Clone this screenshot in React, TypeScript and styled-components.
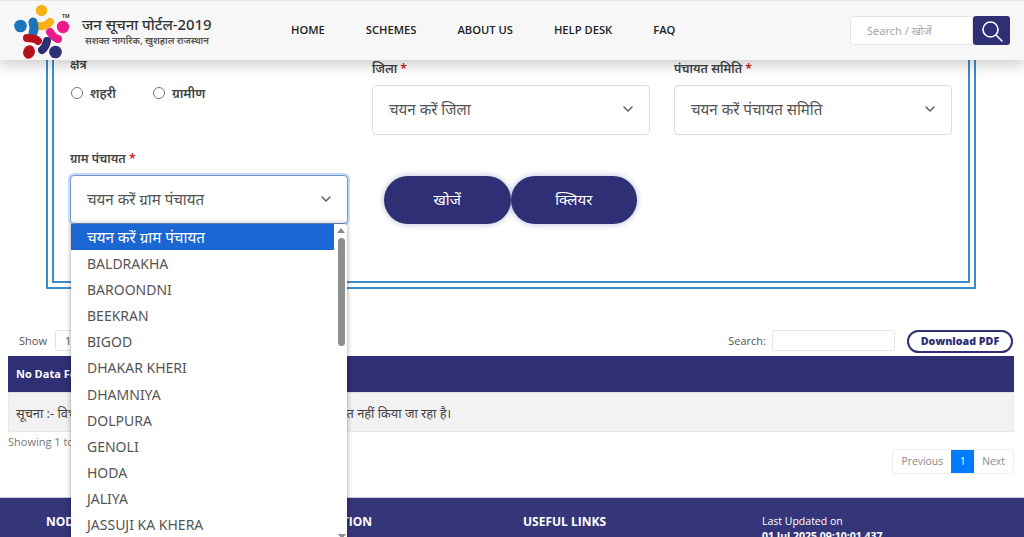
import React from 'react';
import styled, { createGlobalStyle } from 'styled-components';
import { ChevronDown } from 'lucide-react';

const NAVY = '#2e2f75';
const HINDI = `"Noto Sans", "Noto Sans Devanagari", "Open Sans", sans-serif`;

const GlobalStyle = createGlobalStyle`
  html, body { margin: 0; padding: 0; background: #fff; }
  body { font-family: "Open Sans", "Noto Sans", sans-serif; color: #555; }
  * { box-sizing: border-box; }
`;

const Page = styled.div`
  position: relative;
  height: 537px;
  overflow: hidden;
  background: #fff;
`;

const Header = styled.header`
  position: relative;
  z-index: 5;
  height: 60px;
  display: flex;
  align-items: center;
  background: #f7f7f7;
  border-top: 1px solid #e6e6e6;
  box-shadow: 0 4px 14px rgba(0, 0, 0, 0.22);
`;

const Brand = styled.div`
  width: 291px;
  display: flex;
  align-items: center;
  flex: none;
  padding-left: 12px;
`;

const BrandText = styled.div`
  font-family: ${HINDI};
  color: #333;
`;

const BrandTitle = styled.div`
  font-size: 14.9px;
  line-height: 20px;
  font-weight: 500;
  white-space: nowrap;
`;

const BrandSub = styled.div`
  font-size: 9.4px;
  line-height: 12px;
  margin: 1px 0 0 3px;
  font-weight: 600;
  color: #555;
  white-space: nowrap;
`;

const Nav = styled.nav`
  display: flex;
  flex: 1;
  gap: 41px;
  padding-bottom: 2px;
`;

const NavLink = styled.a`
  font-size: 11.2px;
  font-weight: 600;
  color: #222;
`;

const SearchBox = styled.div`
  display: flex;
  margin-right: 14px;
  width: 160px;
  height: 29px;
`;

const SearchInput = styled.div`
  flex: 1;
  background: #fff;
  border: 1px solid #e4e4e4;
  border-radius: 4px 0 0 4px;
  padding-left: 16px;
  font: 11px/27px ${HINDI};
  color: #a5a5a5;
`;

const SearchButton = styled.div`
  width: 37px;
  background: ${NAVY};
  border-radius: 3px;
  display: flex;
  align-items: center;
  justify-content: center;
`;

const FormFrame = styled.section`
  margin: -12px 48px 0 46px;
  height: 241px;
  border: 2px solid #3c8ccb;
  border-top: 0;
  padding: 0 4px 4px;
`;

const FormInner = styled.div`
  height: 100%;
  border: 2px solid #3c8ccb;
  border-top: 0;
  padding: 9px 16px 0;
  display: grid;
  grid-template-columns: repeat(3, 278px);
  column-gap: 24px;
  grid-template-rows: 89px 1fr;
`;

const Field = styled.div`
  padding-top: ${p => p.$top || 0}px;
`;

const Label = styled.div`
  font: 600 12.3px/16px ${HINDI};
  color: #444;
  margin-bottom: 8px;
`;

const Required = styled.span`
  color: #d01818;
`;

const RadioRow = styled.div`
  display: flex;
  gap: 37px;
  padding: 4px 0 0 1px;
`;

const RadioItem = styled.div`
  display: flex;
  align-items: center;
  gap: 7px;
  font: 600 13px/16px ${HINDI};
  color: #444;
`;

const RadioDot = styled.span`
  width: 12px;
  height: 12px;
  border: 1px solid #777;
  border-radius: 50%;
  background: #fff;
`;

const SelectBox = styled.div`
  height: ${p => (p.$open ? 49 : 50)}px;
  display: flex;
  align-items: center;
  justify-content: space-between;
  padding: 0 13px 2px 16px;
  background: #fff;
  border: 1px solid ${p => (p.$open ? '#6f95c9' : '#ddd')};
  border-radius: 4px;
  box-shadow: ${p => (p.$open ? '0 0 0 2px rgba(128, 176, 240, 0.45)' : 'none')};
  font: 400 15.1px/20px ${HINDI};
  color: #555;
`;

const ButtonRow = styled.div`
  display: flex;
  padding: 30px 0 0 12px;
`;

const PillButton = styled.div`
  width: 126.5px;
  height: 48px;
  background: ${NAVY};
  border-radius: 24px;
  box-shadow: 0 0 6px rgba(46, 47, 117, 0.35);
  color: #fff;
  font: 400 15px/46px ${HINDI};
  text-align: center;
`;

const TableSection = styled.section`
  padding: 40px 10px 0 8px;
`;

const Toolbar = styled.div`
  display: flex;
  align-items: center;
  height: 23px;
  margin-bottom: 4px;
  font-size: 11px;
  color: #555;
`;

const ShowLabel = styled.span`
  margin-left: 11px;
`;

const LengthBox = styled.div`
  margin-left: 8px;
  width: 60px;
  height: 21px;
  border: 1px solid #e3e3e3;
  border-radius: 3px;
  padding-left: 9px;
  line-height: 19px;
`;

const SearchLabel = styled.span`
  margin-left: auto;
`;

const FilterInput = styled.div`
  margin-left: 6px;
  width: 123px;
  height: 21px;
  border: 1px solid #e6e6e6;
  border-radius: 2px;
`;

const PdfButton = styled.div`
  margin: 2px 1px 0 12px;
  width: 106px;
  height: 23px;
  border: 2px solid ${NAVY};
  border-radius: 12px;
  color: ${NAVY};
  font-size: 10.7px;
  font-weight: 800;
  line-height: 19px;
  text-align: center;
`;

const TableHead = styled.div`
  height: 36px;
  background: ${NAVY};
  color: #fff;
  font-size: 11px;
  font-weight: 700;
  line-height: 36px;
  padding-left: 8px;
`;

const TableRow = styled.div`
  height: 40px;
  background: #f2f2f2;
  border: 1px solid #e8e8e8;
  border-top: 1px solid #ddd;
  padding-left: 7px;
  font: 400 12.8px/40px ${HINDI};
  color: #444;
  white-space: nowrap;
`;

const TableFoot = styled.div`
  display: flex;
  justify-content: space-between;
`;

const ShowingText = styled.div`
  font-size: 11px;
  line-height: 20px;
  color: #777;
`;

const Pager = styled.div`
  margin-top: 17px;
  display: flex;
  height: 25px;
  border: 1px solid #eee;
  border-radius: 3px;
  font-size: 10.4px;
  line-height: 23px;
  color: #888;
`;

const PagerItem = styled.span`
  padding: 0 8px;
  min-width: ${p => (p.$active ? 23 : 0)}px;
  text-align: center;
  background: ${p => (p.$active ? '#007bff' : 'transparent')};
  color: ${p => (p.$active ? '#fff' : '#888')};
`;

const Footer = styled.footer`
  margin-top: 23px;
  height: 60px;
  background: #35357a;
  border-top: 1px solid #c9c9de;
  display: grid;
  grid-template-columns: 477px 239px 1fr;
  padding: 16px 0 0 46px;
  color: #fff;
`;

const FooterTitle = styled.div`
  font-size: 12px;
  font-weight: 700;
  line-height: 16px;
`;

const FooterSplit = styled.div`
  display: flex;
  width: 326px;
  justify-content: space-between;
`;

const FooterNote = styled.div`
  font-size: 10.5px;
  line-height: 15px;
`;

const FooterDate = styled.div`
  font-size: 10.5px;
  font-weight: 700;
  line-height: 15px;
`;

const Dropdown = styled.div`
  position: absolute;
  z-index: 3;
  left: 71px;
  top: 224px;
  width: 276px;
  height: 320px;
  background: #fff;
  border-radius: 3px 3px 0 0;
  box-shadow: 0 0 5px rgba(0, 0, 0, 0.4);
  padding-right: 13px;
`;

const Option = styled.div`
  height: 26.1px;
  margin-bottom: ${p => (p.$selected ? 1 : 0)}px;
  padding-left: 16px;
  font: 400 ${p => (p.$selected ? 15.2 : 14)}px/26px ${HINDI};
  color: ${p => (p.$selected ? '#fff' : '#555')};
  background: ${p => (p.$selected ? '#1a66d2' : 'transparent')};
  white-space: nowrap;
`;

const ScrollTrack = styled.div`
  position: absolute;
  top: 0;
  right: 1px;
  bottom: 24px;
  width: 10px;
`;

const ScrollArrowUp = styled.div`
  margin: 4px auto 0;
  width: 0;
  height: 0;
  border: 4px solid transparent;
  border-top: 0;
  border-bottom: 5px solid #8c8c8c;
`;

const ScrollThumb = styled.div`
  margin: 5px auto 0;
  width: 7px;
  height: 108px;
  background: #8f8f8f;
  border-radius: 4px;
`;

const ScrollArrowDown = styled.div`
  position: absolute;
  right: 1px;
  top: 310px;
  width: 0;
  height: 0;
  border: 4px solid transparent;
  border-bottom: 0;
  border-top: 5px solid #8c8c8c;
`;

const Logo = () => (
  <svg width="70" height="60" viewBox="0 0 70 60" style={{ flex: 'none' }}>
    <circle cx="29.5" cy="9.5" r="5.7" fill="#f9b115" />
    <path d="M26 25 Q34 26 38 21" stroke="#f9b115" strokeWidth="8" strokeLinecap="round" fill="none" />
    <circle cx="8.5" cy="25" r="6.3" fill="#1b75bb" />
    <path d="M21 21 Q23 27 21 32" stroke="#1b75bb" strokeWidth="9" strokeLinecap="round" fill="none" />
    <circle cx="51" cy="26" r="6.2" fill="#ec1b8c" />
    <path d="M38 31 Q42 37 46 38" stroke="#ec1b8c" strokeWidth="8" strokeLinecap="round" fill="none" />
    <path d="M15 37 Q23 37 26 40" stroke="#b5121b" strokeWidth="8" strokeLinecap="round" fill="none" />
    <ellipse cx="17" cy="51" rx="5.8" ry="6.8" fill="#b5121b" transform="rotate(20 17 51)" />
    <path d="M30 49 Q34 46 35 40" stroke="#2e2f75" strokeWidth="8" strokeLinecap="round" fill="none" />
    <circle cx="43.5" cy="51" r="6.3" fill="#2e2f75" />
    <text x="50" y="17" fontSize="5" fontWeight="700" fontFamily="Open Sans" fill="#444">TM</text>
  </svg>
);

const navLinks = ['HOME', 'SCHEMES', 'ABOUT US', 'HELP DESK', 'FAQ'];
const villages = [
  'BALDRAKHA', 'BAROONDNI', 'BEEKRAN', 'BIGOD', 'DHAKAR KHERI', 'DHAMNIYA',
  'DOLPURA', 'GENOLI', 'HODA', 'JALIYA', 'JASSUJI KA KHERA',
];

export default function App() {
  return (
    <Page>
      <GlobalStyle />
      <Header>
        <Brand>
          <Logo />
          <BrandText>
            <BrandTitle>जन सूचना पोर्टल-2019</BrandTitle>
            <BrandSub>सशक्त नागरिक, खुशहाल राजस्थान</BrandSub>
          </BrandText>
        </Brand>
        <Nav>
          {navLinks.map(link => <NavLink key={link}>{link}</NavLink>)}
        </Nav>
        <SearchBox>
          <SearchInput>Search / खोजें</SearchInput>
          <SearchButton>
            <svg width="24" height="24" viewBox="0 0 24 24" fill="none" stroke="#fff" strokeWidth="1.6" strokeLinecap="round">
              <circle cx="10.5" cy="10.5" r="7.5" />
              <path d="M16 16l6 6" />
            </svg>
          </SearchButton>
        </SearchBox>
      </Header>

      <FormFrame>
        <FormInner>
          <Field>
            <Label>क्षेत्र</Label>
            <RadioRow>
              <RadioItem><RadioDot />शहरी</RadioItem>
              <RadioItem><RadioDot />ग्रामीण</RadioItem>
            </RadioRow>
          </Field>
          <Field $top={4}>
            <Label>जिला <Required>*</Required></Label>
            <SelectBox>चयन करें जिला<ChevronDown size={16} color="#555" /></SelectBox>
          </Field>
          <Field $top={4}>
            <Label>पंचायत समिति <Required>*</Required></Label>
            <SelectBox>चयन करें पंचायत समिति<ChevronDown size={16} color="#555" /></SelectBox>
          </Field>
          <Field $top={5}>
            <Label>ग्राम पंचायत <Required>*</Required></Label>
            <SelectBox $open>चयन करें ग्राम पंचायत<ChevronDown size={16} color="#555" /></SelectBox>
          </Field>
          <ButtonRow>
            <PillButton>खोजें</PillButton>
            <PillButton>क्लियर</PillButton>
          </ButtonRow>
        </FormInner>
      </FormFrame>

      <TableSection>
        <Toolbar>
          <ShowLabel>Show</ShowLabel>
          <LengthBox>10</LengthBox>
          <SearchLabel>Search:</SearchLabel>
          <FilterInput />
          <PdfButton>Download PDF</PdfButton>
        </Toolbar>
        <TableHead>No Data Found</TableHead>
        <TableRow>सूचना :- विभाग की नीति के अनुसार कुछ सूचनाओं का विवरण यहाँ प्रदर्शित नहीं किया जा रहा है।</TableRow>
        <TableFoot>
          <ShowingText>Showing 1 to 1 of 1 entries</ShowingText>
          <Pager>
            <PagerItem>Previous</PagerItem>
            <PagerItem $active>1</PagerItem>
            <PagerItem>Next</PagerItem>
          </Pager>
        </TableFoot>
      </TableSection>

      <Footer>
        <FooterSplit>
          <FooterTitle>NODAL DEPARTMENT</FooterTitle>
          <FooterTitle>INFORMATION</FooterTitle>
        </FooterSplit>
        <FooterTitle>USEFUL LINKS</FooterTitle>
        <div>
          <FooterNote>Last Updated on</FooterNote>
          <FooterDate>01 Jul 2025 09:10:01 437</FooterDate>
        </div>
      </Footer>

      <Dropdown>
        <Option $selected>चयन करें ग्राम पंचायत</Option>
        {villages.map(name => <Option key={name}>{name}</Option>)}
        <ScrollTrack>
          <ScrollArrowUp />
          <ScrollThumb />
        </ScrollTrack>
        <ScrollArrowDown />
      </Dropdown>
    </Page>
  );
}
